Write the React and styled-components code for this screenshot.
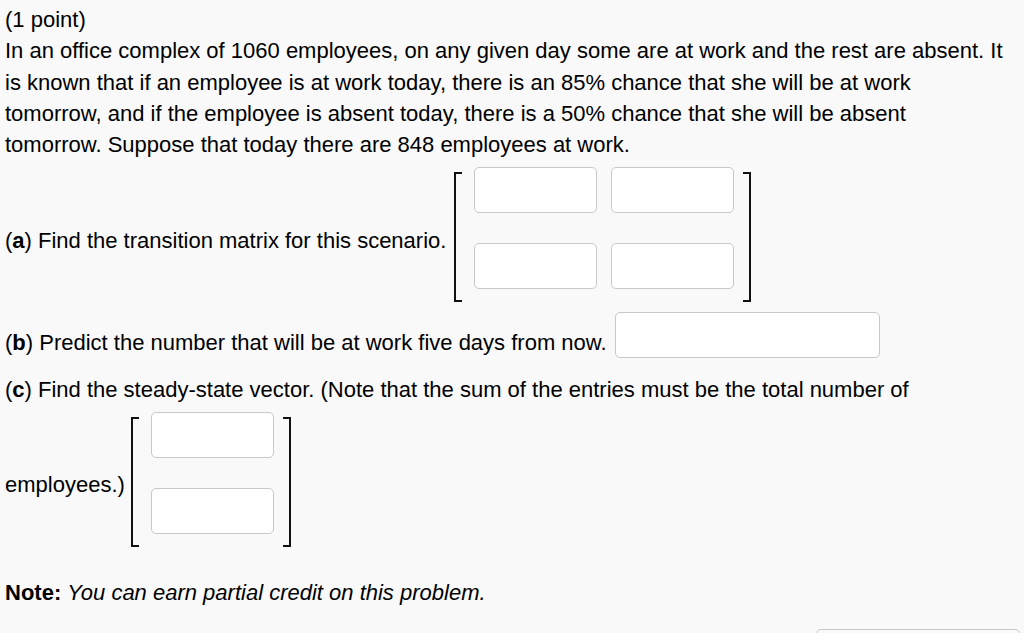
import React from "react";
import styled, { createGlobalStyle } from "styled-components";

const GlobalStyle = createGlobalStyle`
  html, body {
    margin: 0;
    padding: 0;
    background: #f9f9f9;
  }
  body {
    font-family: "Liberation Sans", Arial, Helvetica, sans-serif;
    color: #000;
  }
`;

const Page = styled.div`
  width: 1024px;
  height: 633px;
  overflow: hidden;
  box-sizing: border-box;
  padding: 4px 19px 0 5px;
  font-size: 22px;
  line-height: 31.25px;
`;

const Text = styled.p`
  margin: ${(p) => p.$top || 0}px 0 0 0;
`;

const Row = styled.div`
  display: flex;
  align-items: flex-start;
  margin-top: ${(p) => p.$top || 0}px;
`;

const Label = styled.span`
  margin-top: ${(p) => p.$offset || 0}px;
  margin-right: ${(p) => p.$gap || 8}px;
  white-space: nowrap;
`;

const Matrix = styled.div`
  display: flex;
  align-items: flex-start;
`;

const Bracket = styled.div`
  width: 8px;
  height: 130px;
  margin-top: 5px;
  box-sizing: border-box;
  border: 2px solid #111;
  ${(p) => (p.$side === "left" ? "border-right: none;" : "border-left: none;")}
`;

const Cells = styled.div`
  display: grid;
  grid-template-columns: repeat(${(p) => p.$cols}, 123px);
  grid-auto-rows: 46px;
  column-gap: 14px;
  row-gap: 30px;
  margin: 0 9px 0 12px;
`;

const Field = styled.input`
  box-sizing: border-box;
  width: ${(p) => p.$width || 123}px;
  height: 46px;
  margin: 0;
  padding: 4px 8px;
  border: 1px solid #c8c8c8;
  border-radius: 5px;
  background: #fff;
  font: inherit;
  outline: none;
`;

const Footer = styled.div`
  display: flex;
  justify-content: flex-end;
  margin-top: 21px;
`;

const SubmitBox = styled.div`
  width: 202px;
  height: 30px;
  border: 1px solid #c8c8c8;
  border-radius: 5px;
  background: #fafafa;
  margin-right: -15px;
`;

const MatrixInput = ({ rows, cols }) => (
  <Matrix>
    <Bracket $side="left" />
    <Cells $cols={cols}>
      {Array.from({ length: rows * cols }).map((_, i) => (
        <Field key={i} type="text" />
      ))}
    </Cells>
    <Bracket $side="right" />
  </Matrix>
);

export default function App() {
  return (
    <Page>
      <GlobalStyle />
      <Text>(1 point)</Text>
      <Text>
        In an office complex of 1060 employees, on any given day some are at
        work and the rest are absent. It is known that if an employee is at
        work today, there is an 85% chance that she will be at work tomorrow,
        and if the employee is absent today, there is a 50% chance that she
        will be absent tomorrow. Suppose that today there are 848 employees at
        work.
      </Text>

      <Row $top={7}>
        <Label $offset={58}>
          (<b>a</b>) Find the transition matrix for this scenario.
        </Label>
        <MatrixInput rows={2} cols={2} />
      </Row>

      <Row $top={10}>
        <Label $offset={15}>
          (<b>b</b>) Predict the number that will be at work five days from
          now.
        </Label>
        <Field type="text" $width={265} />
      </Row>

      <Text $top={15}>
        (<b>c</b>) Find the steady-state vector. (Note that the sum of the
        entries must be the total number of
      </Text>
      <Row $top={7}>
        <Label $offset={57} $gap={6}>
          employees.)
        </Label>
        <MatrixInput rows={2} cols={1} />
      </Row>

      <Text $top={30}>
        <b>Note:</b> <i>You can earn partial credit on this problem.</i>
      </Text>

      <Footer>
        <SubmitBox />
      </Footer>
    </Page>
  );
}
